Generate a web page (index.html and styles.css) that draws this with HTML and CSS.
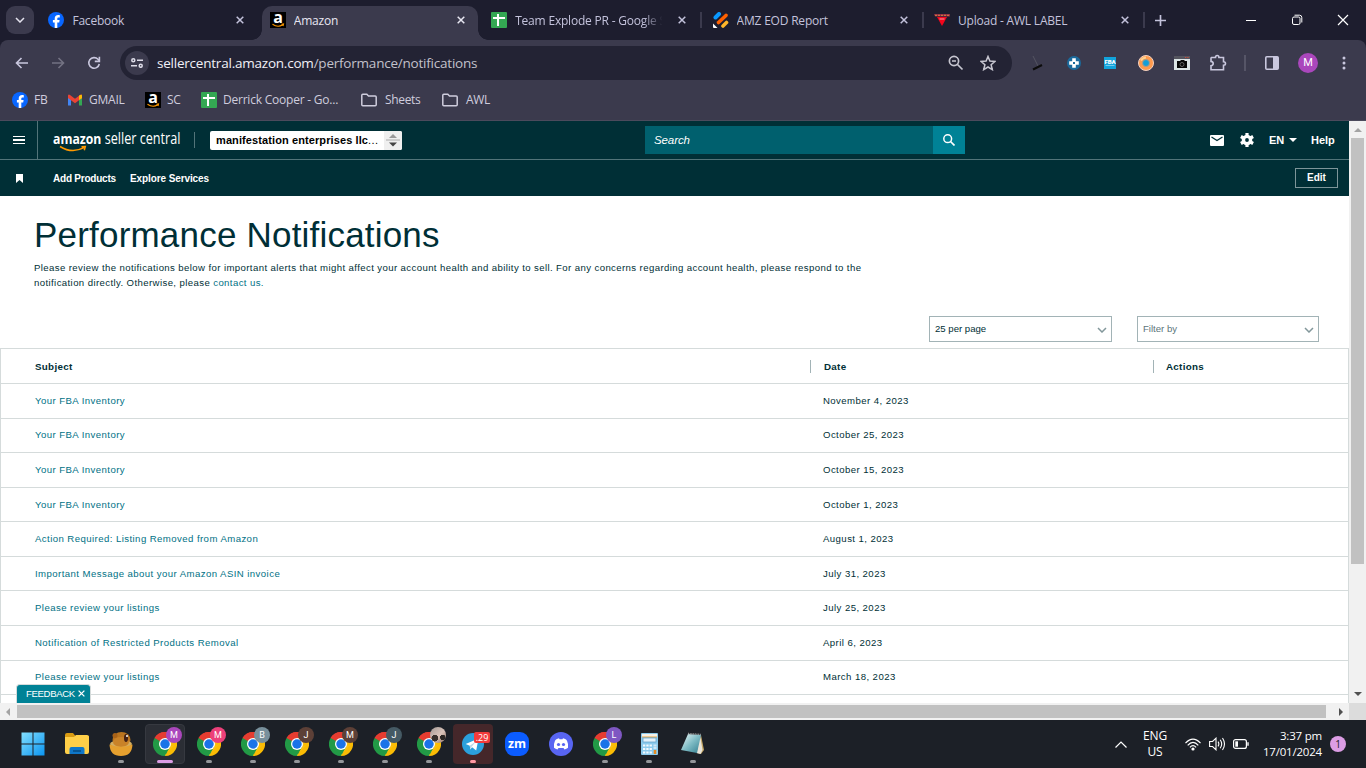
FILE: index.html
```html
<!DOCTYPE html>
<html lang="en">
<head>
  <meta charset="UTF-8">
  <title>Amazon</title>
  <link rel="stylesheet" href="styles.css">
</head>
<body>

<!-- shared icons -->
<svg class="defs" width="0" height="0">
  <symbol id="fb" viewBox="0 0 16 16"><circle cx="8" cy="8" r="8" fill="#0866ff"/><path d="M6.7 16v-5.4H4.9V8h1.8V6.9c0-2.6 1.2-3.8 3.6-3.8.5 0 1.2.1 1.5.2v2.2h-.9c-1.2 0-1.6.4-1.6 1.600V8h2.300l-.4 2.600H9.300V16z" fill="#fff"/></symbol>
  <symbol id="amz" viewBox="0 0 16 16"><rect width="16" height="16" fill="#000"/><text x="8" y="11" text-anchor="middle" font-family="Open Sans, sans-serif" font-size="16" font-weight="700" fill="#fff">a</text><path d="M2.500 12.200Q7.500 15.800 12.500 13M11.500 12.200l2-.2-.5 2" fill="none" stroke="#f90" stroke-width="1.100"/></symbol>
  <symbol id="sheet" viewBox="0 0 16 16"><rect width="16" height="16" rx="1" fill="#34a853"/><path d="M2 6h12M7 2v12" stroke="#fff" stroke-width="2"/></symbol>
  <symbol id="x" viewBox="0 0 8 8"><path d="M.7.7l6.600 6.600M7.300.7L.7 7.300" stroke="currentColor" stroke-width="1.500" fill="none"/></symbol>
  <symbol id="folder" viewBox="0 0 16 16"><path d="M.8 12.800V3.300q0-1 1-1h4l1.700 1.800h6.700q1 0 1 1v7.700q0 1-1 1H1.800q-1 0-1-1z" fill="none" stroke="currentColor" stroke-width="1.500"/></symbol>
  <symbol id="chrome" viewBox="0 0 48 48">
    <path d="M24 24L3.200 12A24 24 0 0 1 44.800 12z" fill="#ea4335"/>
    <path d="M24 24L44.800 12A24 24 0 0 1 24 48z" fill="#fbbc04"/>
    <path d="M24 24L24 48A24 24 0 0 1 3.200 12z" fill="#229a46"/>
    <path d="M24 12h20.800L34.400 30 24 48l10.400-18z" fill="#fbc116"/>
    <path d="M3.200 12L13.600 30 24 24V12z" fill="#229a46"/><path d="M3.200 12A24 24 0 0 1 44.800 12H24L13.600 18z" fill="#e53c30"/>
    <path d="M24 48L34.400 30 24 24z" fill="#229a46"/><path d="M24 48L34.400 30 44 24 24 46z" fill="#fbc116"/>
    <circle cx="24" cy="24" r="12" fill="#fff"/><circle cx="24" cy="24" r="9.500" fill="#1a73e8"/>
  </symbol>
  <symbol id="chev" viewBox="0 0 10 6"><path d="M1 1l4 4 4-4" fill="none" stroke="currentColor" stroke-width="1.500"/></symbol>
</svg>

<!-- tab strip -->
<div class="tabstrip">
  <div class="tab-search"><svg width="10" height="6"><use href="#chev"/></svg></div>
  <div class="tab">
    <svg class="fav"><use href="#fb"/></svg><span class="tab-title">Facebook</span>
    <svg class="tab-x"><use href="#x"/></svg>
  </div>
  <div class="tab active">
    <svg class="fav"><use href="#amz"/></svg><span class="tab-title">Amazon</span>
    <svg class="tab-x"><use href="#x"/></svg>
  </div>
  <div class="tab sep">
    <svg class="fav"><use href="#sheet"/></svg><span class="tab-title fade">Team Explode PR - Google Sheets</span>
    <svg class="tab-x"><use href="#x"/></svg>
  </div>
  <div class="tab sep">
    <svg class="fav" viewBox="0 0 16 16"><g stroke-linecap="round"><path d="M2.500 5.500L6 2" stroke="#0a99ff" stroke-width="4"/><path d="M5.500 10.500L13 3.500" stroke="#ff6100" stroke-width="3.600"/><path d="M10 14L13.500 10.500" stroke="#ffb629" stroke-width="3.600"/></g><path d="M0 11.500L4.500 16H1q-1 0-1-1z" fill="#fff"/></svg>
    <span class="tab-title">AMZ EOD Report</span>
    <svg class="tab-x"><use href="#x"/></svg>
  </div>
  <div class="tab sep">
    <svg class="fav" viewBox="0 0 16 16"><path d="M0 2h16v2.500H1z" fill="#8e2a45"/><path d="M1 3.300h14" stroke="#d68a3c" stroke-dasharray="2 1"/><path d="M3 5h10L8 14z" fill="#f3051c"/><path d="M5.500 7h5" stroke="#f9a0a8"/></svg>
    <span class="tab-title">Upload - AWL LABEL</span>
    <svg class="tab-x"><use href="#x"/></svg>
  </div>
  <svg class="new-tab" viewBox="0 0 10 10"><path d="M5 0v10M0 5h10" stroke="currentColor" stroke-width="1.500"/></svg>
  <div class="win-btns">
    <svg viewBox="0 0 12 12"><path d="M1 6.500h10" stroke="#fff"/></svg>
    <svg viewBox="0 0 12 12"><rect x="1.500" y="3" width="7.500" height="7.500" rx="1.500" fill="none" stroke="#fff"/><path d="M3.500 1.200h5q2.300 0 2.300 2.300v5" fill="none" stroke="#fff"/></svg>
    <svg viewBox="0 0 12 12"><path d="M1 1l10 10M11 1L1 11" stroke="#fff" stroke-width="1.200"/></svg>
  </div>
</div>

<!-- toolbar -->
<div class="toolbar">
  <div class="tool"><svg width="14" height="12" viewBox="0 0 14 12"><path d="M13 6H1.500M6.500 1l-5 5 5 5" fill="none" stroke="#c9c7de" stroke-width="1.600"/></svg></div>
  <div class="tool"><svg width="14" height="12" viewBox="0 0 14 12"><path d="M1 6h11.500M7.500 1l5 5-5 5" fill="none" stroke="#737283" stroke-width="1.600"/></svg></div>
  <div class="tool"><svg width="14" height="14" viewBox="0 0 14 14"><path d="M12.300 8A5.300 5.300 0 1 1 11 3.300L12.300 4.700" fill="none" stroke="#c9c7de" stroke-width="1.600"/><path d="M12.400.8v4.600H7.800" fill="none" stroke="#c9c7de" stroke-width="1.600"/></svg></div>
  <div class="omnibox">
    <div class="site-info"><svg width="12" height="10" viewBox="0 0 12 10"><g fill="none" stroke="#dddce8" stroke-width="1.500"><circle cx="2.300" cy="2.300" r="1.500"/><path d="M6 2.300h6M0 7.800h6"/><circle cx="9.700" cy="7.800" r="1.500"/></g></svg></div>
    <span class="url"><b>sellercentral.amazon.com</b>/performance/notifications</span>
    <svg class="omni-ico" viewBox="0 0 16 16"><circle cx="6" cy="6" r="4.600" fill="none" stroke="#c7c6d0" stroke-width="1.700"/><path d="M9.500 9.500l5 5M4 6h4" stroke="#c7c6d0" stroke-width="1.700"/></svg>
    <svg class="omni-ico" viewBox="0 0 16 16"><path d="M8 1.500l1.900 4.600 5 .4-3.800 3.200 1.200 4.900L8 12l-4.300 2.600 1.200-4.900L1.100 6.500l5-.4z" fill="none" stroke="#c7c6d0" stroke-width="1.500"/></svg>
  </div>
  <div class="tool ext"><svg width="16" height="16" viewBox="0 0 16 16"><path d="M3 1l5 10" stroke="#555563"/><path d="M3 14.500l9-4.500" stroke="#0c0c0c" stroke-width="2"/></svg></div>
  <div class="tool"><svg width="14" height="14" viewBox="0 0 14 14"><circle cx="7" cy="7" r="7" fill="#1b6a9c"/><path d="M7 2.200v9.600M2.200 7h9.600" stroke="#fff" stroke-width="3.600"/><rect x="6" y="6" width="2" height="2" fill="#1b6a9c"/></svg></div>
  <div class="tool"><svg width="12" height="12" viewBox="0 0 12 12"><rect width="12" height="12" fill="#12a4dc"/><text x="6" y="6.800" text-anchor="middle" font-family="Roboto" font-size="6" font-weight="900" fill="#fff">FBA</text><path d="M1.500 8.500h9" stroke="#74cbed"/></svg></div>
  <div class="tool"><svg width="16" height="16" viewBox="0 0 16 16"><circle cx="8" cy="8" r="7.500" fill="#ff9a4d" stroke="#f4d2c2"/><path d="M3 5.500A6 6 0 0 1 8 2.500" stroke="#ffd28f" stroke-width="2" fill="none"/><circle cx="8" cy="8" r="3.500" fill="#149fd8" stroke="#ad9b89"/></svg></div>
  <div class="tool"><svg width="16" height="14" viewBox="0 0 16 14"><rect width="16" height="14" fill="#dce5e6"/><path d="M0 0h16v3H0z" fill="#55555f"/><path d="M11 1.500h4" stroke="#c64b3a" stroke-dasharray="1.300 1"/><path d="M3 5h3l1-1h3l1 1h2v7H3z" fill="#080808"/><circle cx="8" cy="8.500" r="2" fill="none" stroke="#777" stroke-width=".8"/></svg></div>
  <div class="tool"><svg width="18" height="18" viewBox="0 0 18 18"><path d="M2.500 3.500h4q0-2 1.700-2t1.700 2h4.600v4.300q2 0 2 1.700t-2 1.700v4.600H2v-4q2.200-.2 2.200-2.200T2 7.400V4z" fill="none" stroke="#c9c7de" stroke-width="1.600"/></svg></div>
  <div class="tool-sep"></div>
  <div class="tool"><svg width="14" height="14" viewBox="0 0 14 14"><rect x=".8" y=".8" width="12.400" height="12.400" rx="1" fill="none" stroke="#c9c7de" stroke-width="1.600"/><path d="M8 1h5v12H8z" fill="#c9c7de"/></svg></div>
  <div class="tool"><span class="avatar">M</span></div>
  <div class="tool"><svg width="4" height="14" viewBox="0 0 4 14"><g fill="#c9c7de"><circle cx="2" cy="2" r="1.500"/><circle cx="2" cy="7" r="1.500"/><circle cx="2" cy="12" r="1.500"/></g></svg></div>
</div>

<!-- bookmarks -->
<div class="bookmarks">
  <div class="bm bm-fb"><svg><use href="#fb"/></svg><span>FB</span></div>
  <div class="bm bm-gmail"><svg viewBox="0 0 16 16"><path d="M1 3.500v10h3V7z" fill="#4285f4"/><path d="M12 7v6.500h3v-10z" fill="#34a853"/><path d="M12 5l3-2.500v3.500L12 8z" fill="#fbbc04"/><path d="M1 3.500Q1.500 2 3 3l5 3.800L13 3q1.500-1 2 .5V6l-7 5.200L1 6z" fill="#ea4335"/><path d="M12 3.700l1-.7q2-.8 2 1v2L12 8z" fill="#fbbc04"/></svg><span>GMAIL</span></div>
  <div class="bm bm-sc"><svg><use href="#amz"/></svg><span>SC</span></div>
  <div class="bm bm-doc"><svg><use href="#sheet"/></svg><span>Derrick Cooper - Go...</span></div>
  <div class="bm bm-folder"><svg><use href="#folder"/></svg><span>Sheets</span></div>
  <div class="bm bm-folder"><svg><use href="#folder"/></svg><span>AWL</span></div>
</div>

<!-- page -->
<div class="viewport">
  <div class="page">
    <div class="sc-top">
      <div class="burger"><i></i><i></i><i></i></div>
      <svg class="logo" width="130" height="26" viewBox="0 0 130 26">
        <text x="0" y="16.500" textLength="127.500" lengthAdjust="spacingAndGlyphs"><tspan font-weight="700" font-size="15">amazon</tspan> seller central</text>
        <path d="M7 19.500Q19 27 31 20.700M28.500 19.800l3.800-.3-1 3.700" fill="none" stroke="#ff9900" stroke-width="1.500"/>
      </svg>
      <div class="logo-sep"></div>
      <div class="account">
        <span>manifestation enterprises llc<small>...</small></span>
        <div class="spin"><svg width="14" height="14" viewBox="0 0 14 14"><path d="M3 5l4-4 4 4z" fill="#999"/><path d="M0 7h14" stroke="#aaa"/><path d="M3 9.500l4 4 4-4z" fill="#444"/></svg></div>
      </div>
      <div class="search"><span>Search</span><div class="search-btn"><svg width="12" height="12" viewBox="0 0 12 12"><circle cx="4.700" cy="4.700" r="3.900" fill="none" stroke="#fff" stroke-width="1.500"/><path d="M7.500 7.500l4 4" stroke="#fff" stroke-width="1.700"/></svg></div></div>
      <svg class="mail" viewBox="0 0 14 11"><rect width="14" height="11" rx="1" fill="#fff"/><path d="M1.500 2L7 5.500 12.500 2" fill="none" stroke="#002f36" stroke-width="1.300"/></svg>
      <svg class="gear" viewBox="0 0 14 14"><g fill="none" stroke="#fff"><circle cx="7" cy="7" r="3.600" stroke-width="3.400"/><path d="M7 0v3M7 11v3M.9 3.500L3.500 5M10.500 9l2.600 1.500M.9 10.500L3.500 9M10.500 5l2.600-1.500" stroke-width="3.200"/></g></svg>
      <span class="lang">EN</span>
      <span class="caret"></span>
      <span class="help">Help</span>
    </div>
    <div class="sc-sub">
      <svg class="flag" width="7" height="9" viewBox="0 0 7 9"><path d="M0 0h7v9L3.500 6 0 9z" fill="#fff"/></svg>
      <span class="add">Add Products</span>
      <span class="explore">Explore Services</span>
      <button class="edit">Edit</button>
    </div>

    <div class="intro">
      <h1>Performance Notifications</h1>
      <p>Please review the notifications below for important alerts that might affect your account health and ability to sell. For any concerns regarding account health, please respond to the<br>notification directly. Otherwise, please <a>contact us.</a></p>
    </div>

    <div class="filters">
      <div class="select per-page"><span>25 per page</span><svg width="10" height="6"><use href="#chev"/></svg></div>
      <div class="select filter-by"><span>Filter by</span><svg width="10" height="6"><use href="#chev"/></svg></div>
    </div>

    <div class="table">
      <div class="row head"><span class="subject">Subject</span><span class="date">Date</span><span class="actions">Actions</span></div>
      <div class="row"><a class="subject">Your FBA Inventory</a><span class="date">November 4, 2023</span></div>
      <div class="row"><a class="subject">Your FBA Inventory</a><span class="date">October 25, 2023</span></div>
      <div class="row"><a class="subject">Your FBA Inventory</a><span class="date">October 15, 2023</span></div>
      <div class="row"><a class="subject">Your FBA Inventory</a><span class="date">October 1, 2023</span></div>
      <div class="row"><a class="subject">Action Required: Listing Removed from Amazon</a><span class="date">August 1, 2023</span></div>
      <div class="row"><a class="subject">Important Message about your Amazon ASIN invoice</a><span class="date">July 31, 2023</span></div>
      <div class="row"><a class="subject">Please review your listings</a><span class="date">July 25, 2023</span></div>
      <div class="row"><a class="subject">Notification of Restricted Products Removal</a><span class="date">April 6, 2023</span></div>
      <div class="row"><a class="subject">Please review your listings</a><span class="date">March 18, 2023</span></div>
      <div class="row"></div>
    </div>
    <div class="feedback">FEEDBACK<svg width="7" height="7"><use href="#x"/></svg></div>
  </div>
  <div class="vscroll"><span class="arrow up"></span><div class="thumb"></div><span class="arrow down"></span></div>
  <div class="hscroll"><span class="arrow left"></span><div class="thumb"></div><span class="arrow right"></span></div>
  <div class="corner"></div>
</div>

<!-- taskbar -->
<div class="taskbar">
  <div class="apps">
    <div class="app"><svg viewBox="0 0 24 24"><defs><linearGradient id="win" x1="0" y1="0" x2="1" y2="1"><stop offset="0" stop-color="#83e0ff"/><stop offset="1" stop-color="#0a94f0"/></linearGradient></defs><path d="M.5.500h11v11H.5zM12.500.500h11v11h-11zM.5 12.500h11v11H.5zM12.500 12.500h11v11h-11z" fill="url(#win)"/></svg></div>
    <div class="app"><svg viewBox="0 0 24 24"><path d="M0 3q0-2 2-2h6l2.500 3H24v6H0z" fill="#d99b12"/><path d="M0 5h9l2-2h11q2 0 2 2v15q0 2-2 2H2q-2 0-2-2z" fill="#ffcf48"/><path d="M4.500 22v-5q0-2 2-2h11q2 0 2 2v5z" fill="#0f77c9"/><path d="M8 19h8" stroke="#064b83" stroke-width="1.500"/></svg></div>
    <div class="app run"><svg viewBox="0 0 24 24"><ellipse cx="12.500" cy="8" rx="9" ry="8" fill="#b9741f"/><circle cx="6" cy="3.500" r="2.500" fill="#a86218"/><ellipse cx="12" cy="12" rx="11" ry="4" fill="#d3ad61"/><ellipse cx="12" cy="10" rx="8" ry="5" fill="#c98228"/><path d="M.5 12.500Q12 17 23.500 12.500 23 24 12 24T.5 12.500z" fill="#e5a02f"/><ellipse cx="17" cy="6" rx="2" ry="4" fill="#442115"/><circle cx="18" cy="4" r="1" fill="#fff"/></svg></div>
    <div class="app run current"><svg><use href="#chrome"/></svg><b class="badge purple">M</b></div>
    <div class="app run"><svg><use href="#chrome"/></svg><b class="badge pink">M</b></div>
    <div class="app run"><svg><use href="#chrome"/></svg><b class="badge steel">B</b></div>
    <div class="app run"><svg><use href="#chrome"/></svg><b class="badge brown">J</b></div>
    <div class="app run"><svg><use href="#chrome"/></svg><b class="badge brown">M</b></div>
    <div class="app run"><svg><use href="#chrome"/></svg><b class="badge slate">J</b></div>
    <div class="app run"><svg><use href="#chrome"/></svg><b class="badge photo"></b></div>
    <div class="app run alert"><svg class="tg" viewBox="0 0 24 24"><circle cx="12" cy="12" r="12" fill="#2ba0dc"/><path d="M4 12l14-6-2.500 13-4.500-3.500L9 18l-.5-4z" fill="#fff"/><path d="M8.500 14l7-5-5 6L9 18z" fill="#bed9e8"/></svg><b class="count">.29</b></div>
    <div class="app"><svg viewBox="0 0 24 24"><rect width="24" height="24" rx="9" fill="#0b5cff"/><text x="12" y="16" text-anchor="middle" textLength="18" lengthAdjust="spacingAndGlyphs" font-family="Open Sans" font-size="13" font-weight="700" fill="#fff">zm</text></svg></div>
    <div class="app"><svg viewBox="0 0 24 24"><circle cx="12" cy="12" r="12" fill="#5865f2"/><path d="M8.500 6.800L10 6.300l.5 1h3l.5-1 1.500.5q1.800.5 2.500 2 1.500 3 1 7-1.500 1.300-3.500 1.700l-1-1.500h-5l-1 1.500Q6.500 17.100 5 15.800q-.5-4 1-7 .7-1.500 2.500-2z" fill="#fff"/><circle cx="9.500" cy="12.500" r="1.600" fill="#5865f2"/><circle cx="14.500" cy="12.500" r="1.600" fill="#5865f2"/></svg></div>
    <div class="app run"><svg><use href="#chrome"/></svg><b class="badge violet">L</b></div>
    <div class="app run"><svg viewBox="0 0 24 24"><rect x="4" y="1" width="17" height="22" rx="1" fill="#8ccbed"/><path d="M5 2h15v3H5z" fill="#f7f1e5"/><path d="M5 5h15" stroke="#e9a23c"/><rect x="6" y="6" width="13" height="4" fill="#e3f2fb" stroke="#5b9cc7" stroke-width=".7"/><path d="M6 13.500h9M6 17h9M6 20.500h9" stroke="#f2faff" stroke-width="2.200" stroke-dasharray="2.300 1"/><path d="M16.500 13.500h3M16.500 16h3" stroke="#cfe8f7" stroke-width="2"/><path d="M18 18v4" stroke="#e58a1f" stroke-width="2.500"/></svg></div>
    <div class="app run"><svg viewBox="0 0 24 24"><defs><linearGradient id="note" x1="0" y1="0" x2="1" y2="1"><stop offset="0" stop-color="#eff9f9"/><stop offset=".5" stop-color="#7fbcc5"/><stop offset="1" stop-color="#327e90"/></linearGradient></defs><path d="M20 3l3 15-3 4-4-1z" fill="#c2a565"/><path d="M19 3l2.500 15-2 4-4-1z" fill="#e9e5db"/><path d="M7 2l13 1-4 18-16-3z" fill="url(#note)"/><path d="M7 1.500l13 1" stroke="#999" stroke-width="1.500" stroke-dasharray="1 .7"/></svg></div>
  </div>
  <svg class="tray-up" viewBox="0 0 12 7"><path d="M.5 6.500L6 1l5.500 5.500" fill="none" stroke="#fff" stroke-width="1.200"/></svg>
  <div class="ime">ENG<br>US</div>
  <svg class="wifi" viewBox="0 0 16 13"><g fill="none" stroke="#fff" stroke-width="1.200"><path d="M.5 5.200Q8-2.800 15.500 5.200M2.700 7.300Q8 1.600 13.300 7.300M4.900 9.300Q8 6 11.100 9.300"/></g><circle cx="8" cy="11" r="1.600" fill="#fff"/></svg>
  <svg class="vol" viewBox="0 0 17 14"><g fill="none" stroke="#fff" stroke-width="1.100"><path d="M.6 4.500h3L7 1.200v11.600L3.600 9.500h-3zM9 4.700q1.700 2.300 0 4.600M11.200 2.800q3 4.200 0 8.400M13.500 1q4 6 0 12"/></g></svg>
  <svg class="bat" viewBox="0 0 16 10"><rect x=".6" y=".6" width="12.800" height="8.800" rx="2" fill="none" stroke="#fff" stroke-width="1.200"/><path d="M2.300 2.300H5v5.400H2.300z" fill="#fff"/><path d="M15 3.300v3.400" stroke="#fff" stroke-width="1.400"/></svg>
  <div class="clock">3:37 pm<br><span>17/01/2024</span></div>
  <div class="bell">1</div>
</div>

</body>
</html>
```
FILE: styles.css
```css
* { box-sizing: border-box; }
body {
  margin: 0;
  width: 1366px;
  height: 768px;
  overflow: hidden;
  background: #1d1d2e;
  font-family: "Open Sans", "Noto Sans", sans-serif;
  font-size: 12px;
  white-space: nowrap;
}
svg { display: block; flex: none; }
.defs { position: absolute; }

/* Tabs */
.tabstrip {
  display: flex;
  height: 40px;
  color: #c4c3dc;
}
.tab-search {
  width: 28px;
  height: 28px;
  margin: 6px 6px 0;
  border-radius: 9px;
  background: #3b3a4d;
  color: #e4e3ee;
  display: flex;
  align-items: center;
  justify-content: center;
}
.tab {
  position: relative;
  display: flex;
  align-items: center;
  flex: none;
  width: 221.4px;
  padding: 0 17.7px 0 8.400px;
}
.fav { width: 16px; height: 16px; }
.tab-title {
  flex: 1;
  margin-left: 8px;
  letter-spacing: -0.2px;
  overflow: hidden;
}
.fade {
  margin-right: 14px;
  -webkit-mask-image: linear-gradient(to right, #000 86%, transparent 99%);
  mask-image: linear-gradient(to right, #000 86%, transparent 99%);
}
.tab-x { width: 8px; height: 8px; }
.tab.active { color: #e8e7f2; }
.tab.active::before {
  content: "";
  position: absolute;
  z-index: -1;
  left: 1px;
  top: 6px;
  width: 216px;
  height: 34px;
  border-radius: 10px 10px 0 0;
  background: #3b3a4d;
}
.tab.active::after {
  content: "";
  position: absolute;
  z-index: -1;
  left: -9px;
  bottom: 0;
  width: 236px;
  height: 10px;
  background:
    radial-gradient(circle at 0 0, transparent 9.5px, #3b3a4d 10px) left / 10px 10px no-repeat,
    radial-gradient(circle at 100% 0, transparent 9.5px, #3b3a4d 10px) right / 10px 10px no-repeat;
}
.tab.sep::after {
  content: "";
  position: absolute;
  right: 2px;
  top: 12px;
  width: 2px;
  height: 16px;
  background: #3b3a4d;
}
.new-tab { width: 11px; height: 11px; margin: 15px 0 0 8px; }
.win-btns {
  display: flex;
  gap: 34px;
  margin: 14px 17px 0 auto;
}
.win-btns svg { width: 12px; height: 12px; }

/* Toolbar */
.toolbar {
  display: flex;
  align-items: center;
  height: 46px;
  padding-left: 4px;
  background: #3b3a4d;
  border-radius: 8px 8px 0 0;
}
.tool {
  width: 36px;
  display: flex;
  align-items: center;
  justify-content: center;
}
.ext { margin-left: 8px; }
.omnibox {
  display: flex;
  align-items: center;
  width: 892px;
  height: 34px;
  margin-left: 8px;
  padding: 0 16px 0 5px;
  border-radius: 17px;
  background: #232334;
}
.site-info {
  width: 24px;
  height: 24px;
  border-radius: 50%;
  background: #3b3a4d;
  display: flex;
  align-items: center;
  justify-content: center;
}
.url {
  flex: 1;
  margin-left: 8px;
  font-size: 13.5px;
  letter-spacing: -0.22px;
  color: #c2c1cb;
}
.url b { font-weight: 400; color: #f1f0f7; }
.omni-ico { width: 16px; height: 16px; margin-left: 16px; }
.tool-sep { width: 2px; height: 16px; margin: 0 8px; background: #565567; }
.avatar {
  width: 20px;
  height: 20px;
  border-radius: 50%;
  background: #aa47bc;
  color: #fff;
  font: 11px/20px Roboto, sans-serif;
  text-align: center;
}

/* Bookmarks */
.bookmarks {
  display: flex;
  align-items: center;
  height: 35px;
  padding: 0 0 7px 12px;
  background: #3b3a4d;
  border-bottom: 1px solid #4b4a5c;
  color: #cfcddd;
}
.bm { display: flex; align-items: center; gap: 6px; letter-spacing: -0.22px; }
.bm svg { width: 16px; height: 16px; }
.bm-fb { width: 55px; }
.bm-gmail { width: 78px; }
.bm-sc { width: 56px; }
.bm-doc { width: 160px; }
.bm-folder { width: 81px; gap: 8px; letter-spacing: -0.35px; }

/* Page and scrollbars */
.viewport {
  display: grid;
  grid-template: 582px 17px / 1349px 17px;
  height: 599px;
  font-family: "Liberation Sans", Arial, sans-serif;
}
.page {
  position: relative;
  overflow: hidden;
  background: #fff;
  color: #002f36;
}
.vscroll, .hscroll {
  display: flex;
  align-items: center;
  background: #f1f1f1;
}
.vscroll { flex-direction: column; }
.vscroll .thumb { width: 13px; height: 426px; margin-top: 6px; background: #c1c1c1; }
.hscroll .thumb { width: 1309px; height: 13px; margin-left: 6px; background: #c1c1c1; }
.corner { background: #dcdcdc; }
.arrow { border: 4px solid transparent; }
.up { border-top: 0; border-bottom-color: #a3a3a3; margin-top: 7px; }
.down { border-bottom: 0; border-top-color: #505050; margin: auto 0 7px; }
.left { border-left: 0; border-right-color: #a3a3a3; margin-left: 6px; }
.left + .thumb { margin-left: 7px; }
.right { border-right: 0; border-left-color: #505050; margin: 0 6px 0 auto; }

/* Seller Central header */
.sc-top {
  display: flex;
  align-items: center;
  height: 39px;
  background: #002f36;
  border-bottom: 1px solid #527479;
  color: #fff;
}
.burger {
  width: 38px;
  height: 38px;
  padding: 0 12px 0 13px;
  border-right: 1px solid #527479;
  display: flex;
  flex-direction: column;
  justify-content: center;
  gap: 2px;
}
.burger i { height: 1.6px; background: #fff; }
.logo { margin: 0 0 0 15px; font: 15.500px "Open Sans", sans-serif; fill: #fff; overflow: visible; }
.logo-sep { width: 1px; height: 16px; margin-left: 11px; background: #527479; }
.account {
  display: flex;
  align-items: center;
  justify-content: space-between;
  width: 192px;
  height: 19px;
  margin-left: 15px;
  padding-left: 6px;
  border-radius: 2px;
  background: #fff;
  color: #000;
  font-size: 11px;
  font-weight: bold;
  letter-spacing: 0.1px;
  overflow: hidden;
}
.account small { font-size: 11px; font-weight: 400; letter-spacing: 0.4px; }
.spin {
  width: 18px;
  height: 19px;
  background: #efefef;
  display: flex;
  align-items: center;
  justify-content: center;
}
.search {
  display: flex;
  align-items: center;
  justify-content: space-between;
  width: 320px;
  height: 28px;
  margin-left: 243px;
  padding-left: 9px;
  background: #00606e;
  font-size: 11.500px;
  font-style: italic;
  letter-spacing: -0.1px;
}
.search-btn {
  width: 32px;
  height: 28px;
  background: #008296;
  display: flex;
  align-items: center;
  justify-content: center;
}
.mail { width: 14px; height: 11px; margin-left: 245px; }
.gear { width: 14px; height: 14px; margin-left: 16px; }
.lang { width: 20px; margin-left: 15px; font-size: 11px; font-weight: bold; }
.caret { border: 4px solid transparent; border-top-color: #fff; border-bottom: 0; }
.help { margin-left: 14px; font-size: 11px; font-weight: bold; }

.sc-sub {
  display: flex;
  align-items: center;
  height: 36px;
  padding: 0 11px 0 16px;
  background: #002f36;
  color: #fff;
  font-size: 10px;
  font-weight: bold;
}
.add { width: 77px; margin-left: 30px; letter-spacing: -0.22px; }
.explore { letter-spacing: -0.1px; }
.edit {
  width: 43px;
  height: 20px;
  margin-left: auto;
  padding: 0 0 1px;
  border: 1px solid #7d9599;
  background: none;
  color: #fff;
  font: bold 10px "Liberation Sans", Arial, sans-serif;
}

/* Intro text */
.intro { height: 120px; padding: 19px 0 0 34px; }
h1 {
  margin: 0;
  font-size: 35px;
  line-height: 40px;
  font-weight: 400;
  letter-spacing: 0.2px;
}
.intro p { margin: 5px 0 0; font-size: 9.600px; line-height: 15px; letter-spacing: 0.395px; }
a { color: #007185; }

.filters { display: flex; gap: 25px; padding-left: 929px; height: 32px; }
.select {
  display: flex;
  align-items: center;
  justify-content: space-between;
  width: 183px;
  height: 26px;
  padding: 0 4px 1px 5px;
  border: 1px solid #a2b3b6;
  font-size: 9.600px;
}
.select svg { color: #82979b; margin-top: 3px; }
.filter-by { width: 182px; color: #5d767b; }

/* Notifications table */
.table {
  border: 1px solid #d5dbdb;
  border-bottom: 0;
  font-size: 9.600px;
  letter-spacing: 0.43px;
}
.row {
  display: flex;
  align-items: center;
  height: 34.580px;
  padding: 0 0 1px 34px;
  border-bottom: 1px solid #d5dbdb;
}
.subject { width: 788px; }
.date { width: 343px; }
.head { height: 35px; padding-bottom: 0; font-weight: bold; font-size: 9.800px; letter-spacing: 0.3px; }
.head .subject { width: 775px; }
.head .date, .head .actions { padding-left: 13px; border-left: 1px solid #a2b3b6; line-height: 13px; }
.head .actions { padding-left: 12px; }

.feedback {
  position: absolute;
  left: 16px;
  bottom: 0;
  display: flex;
  align-items: center;
  justify-content: space-between;
  width: 75px;
  height: 19px;
  padding: 0 5px 1px 9px;
  border: 1px solid #d5dbdb;
  border-bottom: 0;
  border-radius: 4px 4px 0 0;
  background: #008296;
  color: #fff;
  font-size: 9.600px;
  letter-spacing: -0.35px;
}

/* Taskbar */
.taskbar {
  display: flex;
  align-items: center;
  height: 48px;
  padding-left: 13px;
  background: #1c2027;
  color: #fff;
}
.apps { display: flex; gap: 4px; }
.app {
  position: relative;
  width: 40px;
  height: 40px;
  padding: 8px;
  border-radius: 4px;
}
.app svg { width: 24px; height: 24px; }
.app .tg { width: 22px; height: 22px; margin: 1px; }
.run::after {
  content: "";
  position: absolute;
  left: 17px;
  bottom: 1px;
  width: 6px;
  height: 3px;
  border-radius: 2px;
  background: #94969a;
}
.current { background: #2b2e35; border: 1px solid #363940; padding: 7px; }
.current::after { left: 11px; bottom: 0; width: 16px; background: #dc9de5; }
.alert { background: #45272a; }
.alert::after { background: #ff99a4; }
.badge {
  position: absolute;
  left: 21px;
  top: 3px;
  width: 16px;
  height: 16px;
  border-radius: 50%;
  font: 9px/16px Roboto, sans-serif;
  text-align: center;
}
.current .badge { left: 20px; top: 2px; }
.purple { background: #aa47bc; }
.pink { background: #ec407a; }
.steel { background: #78909c; }
.brown { background: #5d4037; }
.slate { background: #455a64; }
.violet { background: #7e57c2; }
.photo {
  background:
    radial-gradient(circle at 80% 65%, #2a2623 15%, transparent 17%),
    radial-gradient(circle at 30% 70%, #37302c 20%, transparent 22%),
    linear-gradient(135deg, #a39a96, #d9c3b9 55%, #8b6a5c);
}
.count {
  position: absolute;
  left: 21px;
  top: 8px;
  width: 16px;
  height: 11px;
  border-radius: 2px;
  background: #f33b3b;
  font-size: 9px;
  font-weight: 400;
  line-height: 11px;
  text-align: center;
}
.tray-up { width: 12px; height: 7px; margin-left: 402px; }
.ime { width: 28px; margin-left: 14px; text-align: center; font-size: 12px; line-height: 16px; letter-spacing: -0.2px; }
.wifi { width: 16px; height: 13px; margin-left: 16px; }
.vol { width: 17px; height: 14px; margin-left: 8px; }
.bat { width: 16px; height: 10px; margin-left: 7px; }
.clock { width: 73px; text-align: right; font-size: 11.500px; line-height: 16px; letter-spacing: -0.2px; }
.bell {
  width: 16px;
  height: 16px;
  margin-left: 8px;
  border-radius: 50%;
  background: #dc9de5;
  color: #222;
  font-size: 10px;
  line-height: 16px;
  text-align: center;
}
```
